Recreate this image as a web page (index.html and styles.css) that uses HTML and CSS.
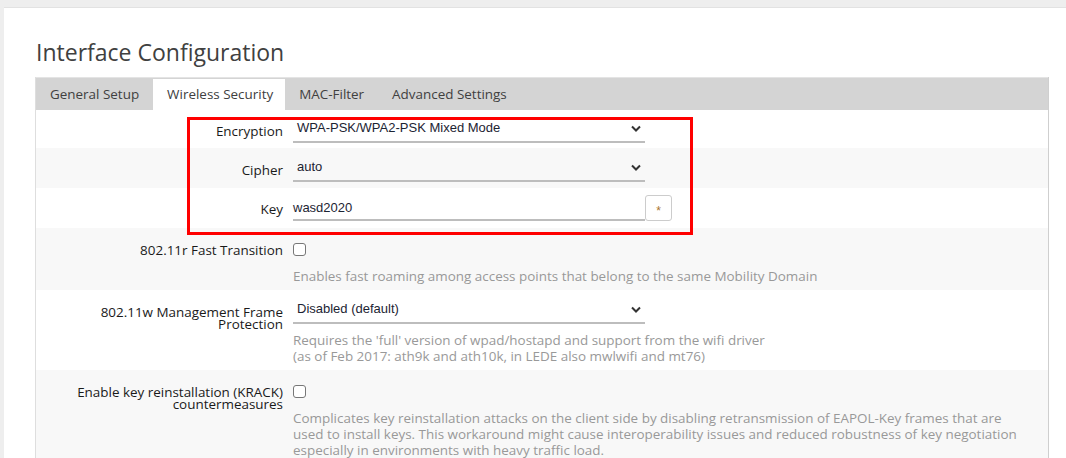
FILE: index.html
```html
<!DOCTYPE html>
<html lang="en">
<head>
<meta charset="utf-8">
<title>Interface Configuration</title>
<link rel="stylesheet" href="styles.css">
</head>
<body>
<div class="page">
  <h2 class="title">Interface Configuration</h2>
  <div class="panel">
    <ul class="tabs">
      <li class="tab">General Setup</li>
      <li class="tab active">Wireless Security</li>
      <li class="tab">MAC-Filter</li>
      <li class="tab">Advanced Settings</li>
    </ul>
    <div class="rows">
      <div class="row">
        <label class="lbl">Encryption</label>
        <div class="field">
          <div class="select"><span>WPA-PSK/WPA2-PSK Mixed Mode</span><svg class="chev" width="10" height="7" viewBox="0 0 10 7"><polyline points="1,1.5 5,5.5 9,1.5" fill="none" stroke="#333" stroke-width="2"/></svg></div>
        </div>
      </div>
      <div class="row">
        <label class="lbl">Cipher</label>
        <div class="field">
          <div class="select"><span>auto</span><svg class="chev" width="10" height="7" viewBox="0 0 10 7"><polyline points="1,1.5 5,5.5 9,1.5" fill="none" stroke="#333" stroke-width="2"/></svg></div>
        </div>
      </div>
      <div class="row row-key">
        <label class="lbl">Key</label>
        <div class="field keyfield">
          <div class="input">wasd2020</div>
          <div class="btn">*</div>
        </div>
      </div>
      <div class="row">
        <label class="lbl">802.11r Fast Transition</label>
        <div class="field">
          <div class="cbwrap"><span class="cb"></span></div>
          <div class="desc">Enables fast roaming among access points that belong to the same Mobility Domain</div>
        </div>
      </div>
      <div class="row">
        <label class="lbl">802.11w Management Frame Protection</label>
        <div class="field">
          <div class="select"><span>Disabled (default)</span><svg class="chev" width="10" height="7" viewBox="0 0 10 7"><polyline points="1,1.5 5,5.5 9,1.5" fill="none" stroke="#333" stroke-width="2"/></svg></div>
          <div class="desc desc-sel">Requires the 'full' version of wpad/hostapd and support from the wifi driver<br>(as of Feb 2017: ath9k and ath10k, in LEDE also mwlwifi and mt76)</div>
        </div>
      </div>
      <div class="row">
        <label class="lbl">Enable key reinstallation (KRACK) countermeasures</label>
        <div class="field">
          <div class="cbwrap"><span class="cb"></span></div>
          <div class="desc desc-wide">Complicates key reinstallation attacks on the client side by disabling retransmission of EAPOL-Key frames that are used to install keys. This workaround might cause interoperability issues and reduced robustness of key negotiation especially in environments with heavy traffic load.</div>
        </div>
      </div>
      <div class="highlight"></div>
    </div>
  </div>
</div>
</body>
</html>
```
FILE: styles.css
```css
html, body {
  margin: 0;
  padding: 0;
}
body {
  background: #eeeeee;
  font-family: "Open Sans", "Noto Sans", sans-serif;
  color: #222;
  overflow: hidden;
}
.page {
  margin: 7px 0 0 4px;
  background: #fff;
  border-top: 1px solid #e2e2e2;
  height: 460px;
  padding-top: 1px;
}
.title {
  margin: 27px 0 0 32px;
  font-weight: normal;
  font-size: 23px;
  line-height: 32px;
  color: #404040;
  height: 41px;
}
.panel {
  margin-left: 31px;
  width: 1012px;
  border-left: 1px solid #dedede;
  border-right: 1px solid #cfcfcf;
}
.tabs {
  list-style: none;
  margin: 0;
  padding: 0;
  display: flex;
  background: #d4d4d4;
  border-top: 1px solid #e4e4e4;
  height: 32px;
}
.tab {
  padding: 0 14px;
  font-size: 13.45px;
  line-height: 32px;
  color: #404040;
}
.tab.active {
  background: #fff;
  margin-top: 1px;
  line-height: 31px;
  padding-right: 12px;
}
.rows {
  position: relative;
}
.row {
  display: grid;
  grid-template-columns: 247px 380px;
  column-gap: 10px;
  padding: 8px 0 6px;
}
.row:first-child {
  padding-top: 7px;
  padding-bottom: 5px;
}
.row:nth-child(even) {
  background: #f8f8f8;
}
.lbl {
  text-align: right;
  font-size: 13.45px;
  line-height: 12px;
  padding: 8px 0 0 40px;
  color: #1a1a1a;
}
.field {
  display: flex;
  flex-direction: column;
}
.select {
  width: 352px;
  height: 24px;
  border-bottom: 2px solid #bdbdbd;
  display: flex;
  justify-content: space-between;
  align-items: flex-start;
}
.select span {
  font-family: "Liberation Sans", Arial, sans-serif;
  font-size: 13px;
  line-height: 20px;
  padding: 1px 0 0 4px;
  color: #1c2433;
}
.chev {
  margin: 8px 4px 0 0;
}
.row-key {
  padding: 7px 0 7px;
}
.keyfield {
  flex-direction: row;
  align-items: flex-start;
}
.input {
  width: 352px;
  height: 21px;
  padding-top: 3px;
  border-bottom: 2px solid #bdbdbd;
  font-family: "Liberation Sans", Arial, sans-serif;
  font-size: 13px;
  line-height: 20px;
  color: #1c2433;
}
.btn {
  width: 25px;
  height: 24px;
  border: 1px solid #cccccc;
  border-radius: 3px;
  background: #fff;
  font-family: "Liberation Sans", Arial, sans-serif;
  font-size: 12px;
  line-height: 30px;
  text-align: center;
  color: #a8742e;
}
.cbwrap {
  height: 26px;
  display: flex;
  align-items: center;
}
.cb {
  width: 11px;
  height: 11px;
  border: 1px solid #777;
  border-radius: 3px;
  background: #fff;
}
.desc {
  margin-top: 6px;
  font-size: 13.45px;
  line-height: 16px;
  color: #999;
  white-space: nowrap;
}
.desc-sel {
  margin-top: 8px;
}
.desc-wide {
  white-space: normal;
  width: 734px;
}
.highlight {
  position: absolute;
  left: 151px;
  top: 7px;
  width: 500px;
  height: 112px;
  border: 3px solid #ff0000;
  pointer-events: none;
}
```
